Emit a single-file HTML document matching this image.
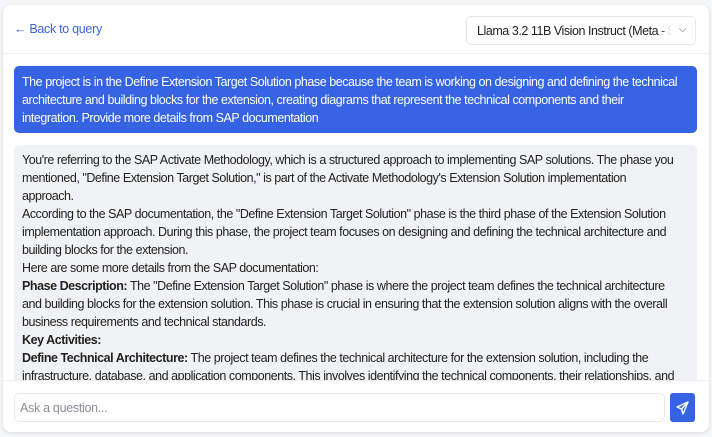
<!DOCTYPE html>
<html><head><meta charset="utf-8"><style>
*{box-sizing:border-box;margin:0;padding:0}
html,body{width:712px;height:437px;overflow:hidden;background:#f5f6f8;font-family:"Liberation Sans",Arial,sans-serif}
.card{position:absolute;left:3px;top:5px;width:706px;height:427px;background:#fff;border-radius:8px;box-shadow:0 1px 3px rgba(0,0,0,.12);overflow:hidden}
.hdr{position:absolute;left:0;top:0;width:706px;height:49px;border-bottom:1px solid #eceef1}
.back{position:absolute;left:11px;top:17px;font-size:12.5px;color:#3b63e0;letter-spacing:-0.3px}
.sel{position:absolute;left:463px;top:11px;width:230px;height:29px;border:1px solid #e5e7eb;border-radius:5px;font-size:12.5px;letter-spacing:-0.45px;color:#222;padding:7px 0 0 10px;white-space:nowrap;overflow:hidden}
.sel span{position:absolute;right:0;top:0;height:27px;width:34px;font-size:10px;color:#555;background:linear-gradient(90deg,rgba(255,255,255,0),#fff 30%);padding:7px 0 0 18px}
.blue{position:absolute;left:11px;top:61px;width:683px;height:67px;background:#3563e3;border-radius:5px;color:#fff;font-size:12.5px;letter-spacing:-0.45px;line-height:18px;padding:7px 8px;white-space:nowrap;overflow:hidden}
.gray{position:absolute;left:11px;top:140px;width:683px;height:240px;background:#f1f2f4;border-radius:5px;color:#222;font-size:12.5px;letter-spacing:-0.45px;line-height:18px;padding:6px 8px;white-space:nowrap;overflow:hidden}
.foot{position:absolute;left:0;top:375px;width:706px;height:52px;background:#fff;border-top:1px solid #eceef1}
.inp{position:absolute;left:11px;top:12px;width:651px;height:29px;border:1px solid #e8eaed;border-radius:5px;font-size:12.5px;letter-spacing:-0.3px;color:#8a8f98;padding:7px 0 0 5px}
.btn{position:absolute;left:667px;top:12px;width:25px;height:29px;background:#3563e3;border-radius:3px}
</style></head><body>
<div class="card">
<div class="hdr"><div class="back">← Back to query</div><div class="sel">Llama 3.2 11B Vision Instruct (Meta - $0<span>⌵</span></div></div>
<div class="blue">The project is in the Define Extension Target Solution phase because the team is working on designing and defining the technical<br>architecture and building blocks for the extension, creating diagrams that represent the technical components and their<br>integration. Provide more details from SAP documentation</div>
<div class="gray">You're referring to the SAP Activate Methodology, which is a structured approach to implementing SAP solutions. The phase you<br>mentioned, "Define Extension Target Solution," is part of the Activate Methodology's Extension Solution implementation<br>approach.<br>According to the SAP documentation, the "Define Extension Target Solution" phase is the third phase of the Extension Solution<br>implementation approach. During this phase, the project team focuses on designing and defining the technical architecture and<br>building blocks for the extension.<br>Here are some more details from the SAP documentation:<br><b>Phase Description:</b> The "Define Extension Target Solution" phase is where the project team defines the technical architecture<br>and building blocks for the extension solution. This phase is crucial in ensuring that the extension solution aligns with the overall<br>business requirements and technical standards.<br><b>Key Activities:</b><br><b>Define Technical Architecture:</b> The project team defines the technical architecture for the extension solution, including the<br>infrastructure, database, and application components. This involves identifying the technical components, their relationships, and</div>
<div class="foot"><div class="inp">Ask a question...</div><div class="btn"><svg width="25" height="29" viewBox="0 0 25 29"><path d="M18 9 L7 14 L11.5 16 L13 21 Z M11.5 16 L18 9" fill="none" stroke="#fff" stroke-width="1.4" stroke-linejoin="round"/></svg></div></div>
</div>
</body></html>
